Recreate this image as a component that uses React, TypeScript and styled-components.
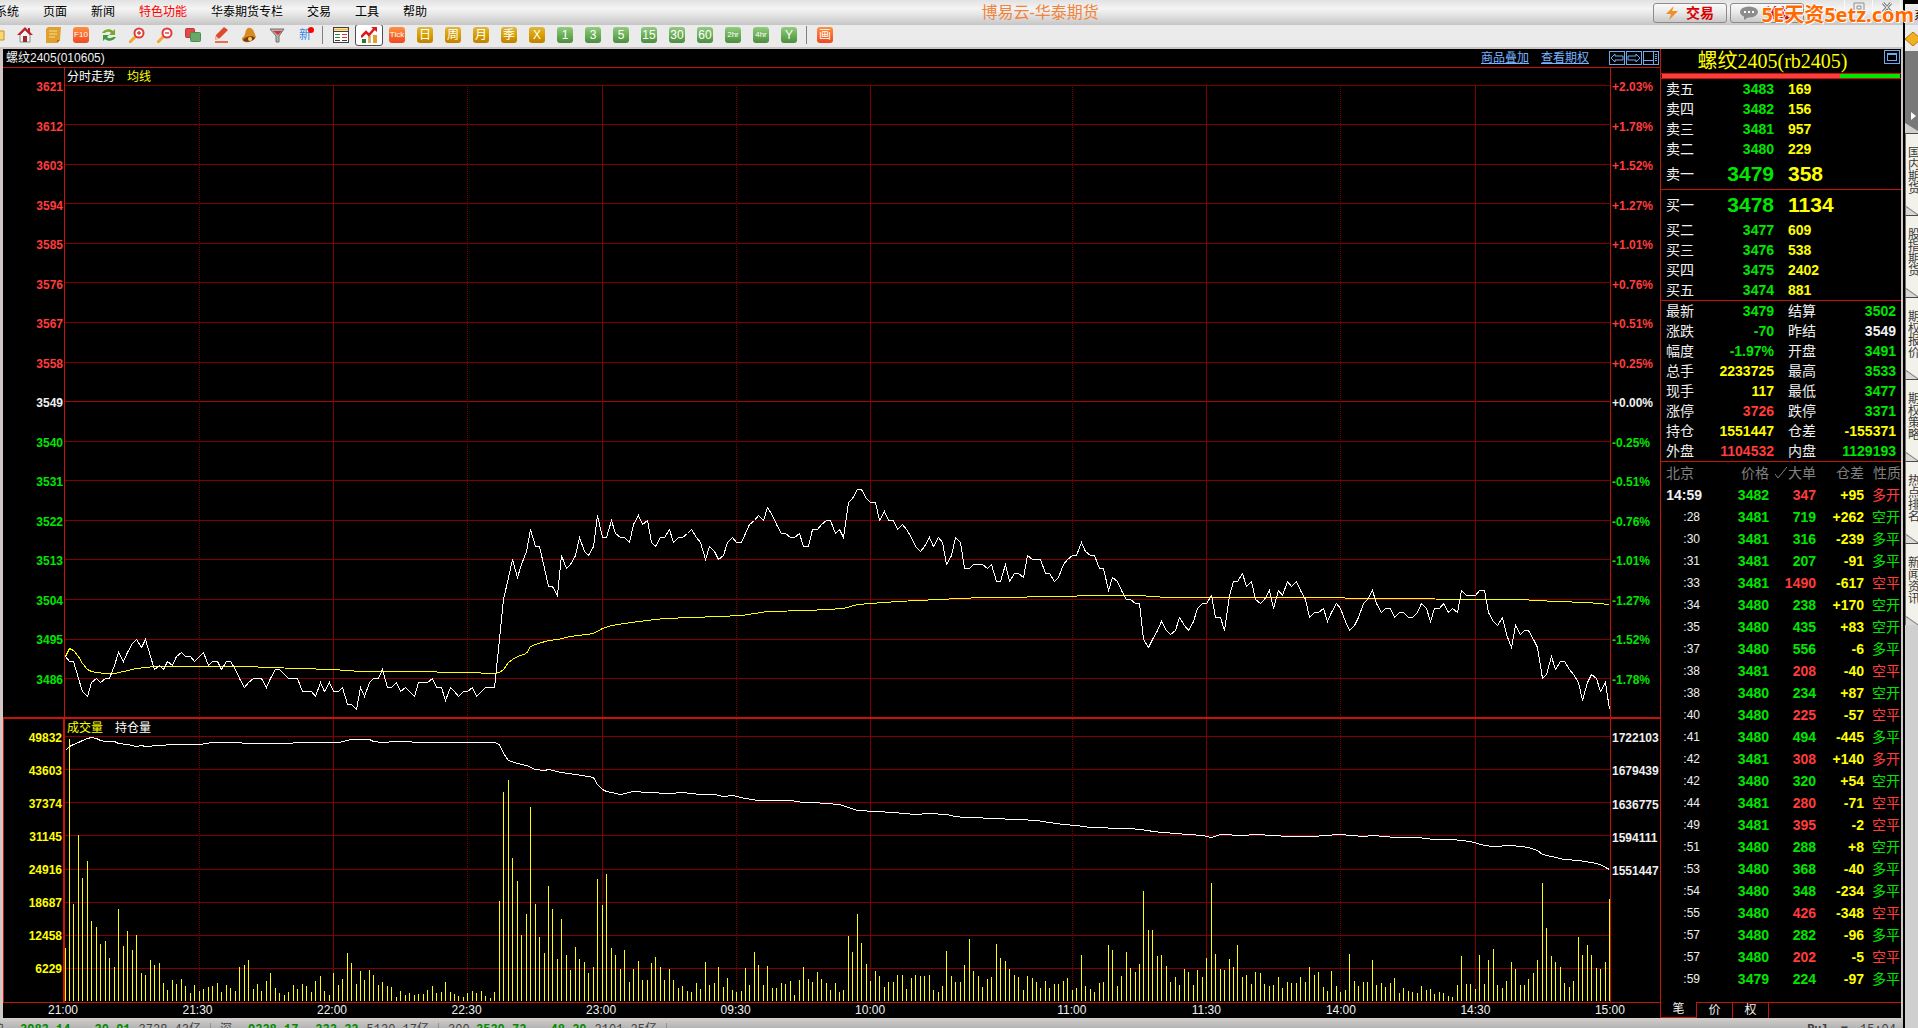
import React from "react";
import styled, { createGlobalStyle } from "styled-components";

const SANS = '"Liberation Sans", "Noto Sans CJK SC", sans-serif';
const RED = "#ff3c3c";
const GREEN = "#00e600";
const YELLOW = "#ffff00";
const WHITE = "#f0f0f0";
const FRAME = "#c81408";
const GRID = "#800000";

const GlobalStyle = createGlobalStyle`
  * { box-sizing: border-box; }
  body { margin: 0; background: #000; overflow: hidden; font: 12px/14px ${SANS}; }
  button { margin: 0; padding: 0; border: 0; background: none; color: inherit; font: inherit; white-space: nowrap; cursor: pointer; }
  table { border-collapse: collapse; table-layout: fixed; width: 100%; }
  td, th { padding: 0; font-weight: inherit; white-space: nowrap; }
`;

/* ---------- window ---------- */

const Screen = styled.div`
  position: relative;
  display: flex;
  height: 100vh;
  overflow: hidden;
`;
const Window = styled.div`
  flex: 1;
  min-width: 0;
  display: flex;
  flex-direction: column;
`;
const TitleBar = styled.header`
  display: flex;
  align-items: center;
  height: 25px;
  background: linear-gradient(#e2e2e2, #f4f4f4 35%, #e4e4e4 60%, #c6c6c6);
`;
const Menu = styled.nav`
  display: flex;
  gap: 24px;
  margin-left: -5px;
`;
const MenuItem = styled.button<{ $hot?: boolean }>`
  line-height: 25px;
  color: ${(p) => (p.$hot ? "#ff0000" : "#000")};
`;
const AppTitle = styled.h1`
  flex: 1;
  margin: 0;
  text-align: center;
  font-size: 16px;
  line-height: 22px;
  font-weight: 400;
  color: #f0843c;
`;
const HeaderActions = styled.div`
  display: flex;
  gap: 3px;
`;
const PillButton = styled.button`
  display: flex;
  align-items: center;
  justify-content: center;
  gap: 8px;
  width: 74px;
  height: 20px;
  border: 1px solid #8c8c8c;
  border-radius: 3px;
  background: linear-gradient(#fafafa, #e8e8e8 50%, #c8c8c8);
  color: #d80000;
  font-size: 14px;
  font-weight: 700;
`;
const WindowControls = styled.div`
  display: flex;
  align-self: flex-start;
  margin-left: 13px;
  margin-right: 2px;
`;
const ControlButton = styled.button`
  display: grid;
  place-items: center;
  width: 28px;
  height: 15px;
  border-right: 1px solid #fafafa;
`;
const Watermark = styled.div`
  position: absolute;
  top: 0;
  right: 4px;
  font: 700 20px/30px "Noto Sans", "Noto Sans CJK SC", sans-serif;
  color: #ff6a00;
  text-shadow: 1px 1px 0 #fff, -1px 0 0 #fff, 0 -1px 0 #fff;
  pointer-events: none;
`;

/* ---------- toolbar ---------- */

const Toolbar = styled.div`
  display: flex;
  align-items: center;
  height: 24px;
  padding-bottom: 2px;
  background: #ebebeb;
  border-bottom: 2px solid #cdc3c3;
  overflow: hidden;
`;
const Tool = styled.button<{ $active?: boolean; $first?: boolean }>`
  display: grid;
  place-items: center;
  flex: none;
  width: 28px;
  height: 22px;
  margin-left: ${(p) => (p.$first ? "-17px" : "0")};
  border: ${(p) => (p.$active ? "1px solid #505050" : "0")};
  border-radius: 3px;
  background: ${(p) => (p.$active ? "#fff" : "none")};
`;
const ToolDivider = styled.span`
  width: 5px;
  height: 18px;
  border-left: 1px solid #808080;
  margin-left: 3px;
`;
const tones = {
  gold: "linear-gradient(#e0b840, #d8a000 50%, #c08000)",
  green: "linear-gradient(#94cc80, #6cb058 50%, #4c8c40)",
  orange: "linear-gradient(#ff9040, #f04820)",
};
const Badge = styled.span<{ $tone: keyof typeof tones; $small?: boolean }>`
  display: flex;
  align-items: center;
  justify-content: center;
  width: 16px;
  height: 16px;
  border-radius: 3px;
  background: ${(p) => tones[p.$tone]};
  color: #fff;
  font-size: ${(p) => (p.$small ? 8 : 12)}px;
  line-height: 16px;
`;
const NewMark = styled.span`
  position: relative;
  color: #3c8ce6;
  line-height: 16px;
  &::after {
    content: "";
    position: absolute;
    top: 0;
    right: -3px;
    width: 6px;
    height: 6px;
    border-radius: 50%;
    background: #ff0000;
  }
`;

/* ---------- body ---------- */

const Body = styled.div`
  flex: 1;
  min-height: 0;
  display: flex;
  background: #000;
  border-left: 3px solid #cfc8c6;
  border-right: 2px solid #cfc8c6;
`;
const ChartArea = styled.main`
  flex: 1;
  min-width: 0;
  display: flex;
  flex-direction: column;
`;
const ChartHeader = styled.div`
  display: flex;
  align-items: center;
  height: 19px;
  padding: 0 1px 0 3px;
  border-bottom: 1px solid ${FRAME};
  color: ${WHITE};
`;
const HeaderLinks = styled.div`
  display: flex;
  gap: 12px;
  margin: 0 20px 0 auto;
  a { color: #78b4ff; }
`;
const PaneButtons = styled.div`
  display: flex;
  gap: 1px;
`;
const PaneButton = styled.button`
  display: grid;
  place-items: center;
  width: 16px;
  height: 14px;
  border: 1px solid #6eaaf0;
`;
const Pane = styled.section<{ $grow: number }>`
  flex: ${(p) => p.$grow} 1 0;
  min-height: 0;
  display: grid;
  grid-template-columns: 61px 1fr 49px;
`;
const PaneDivider = styled.div`
  height: 2px;
  background: ${FRAME};
`;
const Scale = styled.div<{ $top: number; $bottom: number; $side: "left" | "right"; $framed?: boolean }>`
  display: flex;
  flex-direction: column;
  justify-content: space-between;
  min-height: 0;
  padding: ${(p) => p.$top}px 1px ${(p) => p.$bottom}px;
  text-align: ${(p) => (p.$side === "left" ? "right" : "left")};
  font-weight: 700;
  border: 0 solid ${FRAME};
  border-left-width: ${(p) => (p.$framed ? 1 : 0)}px;
  border-right-width: ${(p) => (p.$framed ? 1 : 0)}px;
`;
const Mark = styled.span<{ $color: string }>`
  color: ${(p) => p.$color};
  line-height: 14px;
`;
const Plot = styled.div`
  display: grid;
  grid-template: 17px minmax(0, 1fr) / minmax(0, 1fr);
  min-height: 0;
  border-left: 1px solid ${FRAME};
  border-right: 1px solid ${FRAME};
`;
const Legend = styled.div`
  grid-area: 1 / 1;
  display: flex;
  gap: 12px;
  padding-left: 2px;
  line-height: 18px;
  color: #fff;
  z-index: 1;
`;
const LegendItem = styled.span<{ $color?: string }>`
  color: ${(p) => p.$color || "#fff"};
`;
const Drawing = styled.svg<{ $whole?: boolean }>`
  grid-area: ${(p) => (p.$whole ? "1 / 1 / 3 / 2" : "2 / 1")};
  display: block;
  width: 100%;
  height: 100%;
  * { vector-effect: non-scaling-stroke; }
`;
const TimeAxis = styled.div`
  display: flex;
  height: 16px;
  padding: 0 50px 0 60px;
  border-top: 1px solid ${FRAME};
  color: ${WHITE};
`;
const TimeSlot = styled.div<{ $minutes: number }>`
  flex: ${(p) => p.$minutes} 1 0;
  min-width: 0;
`;
const TimeLabel = styled.span`
  display: flex;
  justify-content: center;
  width: 0;
  line-height: 15px;
`;

/* ---------- quote panel ---------- */

const Panel = styled.aside`
  flex: none;
  display: flex;
  flex-direction: column;
  width: 241px;
  border-left: 1px solid ${FRAME};
  color: ${WHITE};
`;
const PanelTitle = styled.div`
  display: flex;
  align-items: flex-start;
  height: 24px;
  padding: 1px 1px 0 0;
  h2 {
    flex: 1;
    margin: 0;
    text-align: center;
    font: 400 20px/22px "Liberation Serif", "Noto Sans CJK SC", serif;
    color: ${YELLOW};
  }
`;
const Ratio = styled.div`
  display: flex;
  height: 6px;
  padding: 0 1px;
  border-top: 1px solid ${FRAME};
  border-bottom: 1px solid ${FRAME};
`;
const RatioPart = styled.div<{ $share: number; $color: string }>`
  flex: ${(p) => p.$share};
  background: ${(p) => p.$color};
`;
const Block = styled.div`
  border-bottom: 1px solid ${FRAME};
`;
const QuoteTable = styled.table`
  font-size: 14px;
  line-height: 20px;
`;
const Row = styled.tr<{ $height?: number }>`
  height: ${(p) => p.$height || 20}px;
`;
const NameCell = styled.th<{ $second?: boolean }>`
  padding-left: ${(p) => (p.$second ? 14 : 5)}px;
  text-align: left;
  font-weight: 400;
`;
const NumCell = styled.td<{ $color: string; $left?: boolean; $big?: boolean; $end?: boolean }>`
  padding-left: ${(p) => (p.$left ? 14 : 0)}px;
  padding-right: ${(p) => (p.$end ? 5 : 0)}px;
  text-align: ${(p) => (p.$left ? "left" : "right")};
  color: ${(p) => p.$color};
  font-weight: 700;
  font-size: ${(p) => (p.$big ? 21 : 14)}px;
`;
const HeadCell = styled.th<{ $left?: boolean }>`
  padding-left: ${(p) => (p.$left ? 5 : 0)}px;
  text-align: ${(p) => (p.$left ? "left" : "right")};
  color: #808080;
  font-weight: 400;
  svg { vertical-align: -1px; }
`;
const TimeCell = styled.td<{ $first?: boolean }>`
  padding-right: ${(p) => (p.$first ? 0 : 2)}px;
  text-align: right;
  font-size: ${(p) => (p.$first ? 14 : 12)}px;
  font-weight: ${(p) => (p.$first ? 700 : 400)};
`;
const KindCell = styled.td<{ $color: string }>`
  padding-right: 1px;
  text-align: right;
  color: ${(p) => p.$color};
`;
const Tabs = styled.div`
  display: flex;
  height: 16px;
  margin-top: auto;
`;
const Tab = styled.button<{ $active?: boolean }>`
  width: 36px;
  line-height: 15px;
  border: 0 solid ${FRAME};
  border-right-width: 1px;
  border-top-width: ${(p) => (p.$active ? 0 : 1)}px;
  border-bottom-width: ${(p) => (p.$active ? 1 : 0)}px;
`;
const TabRest = styled.span`
  flex: 1;
  border-top: 1px solid ${FRAME};
`;

/* ---------- status bar and side strip ---------- */

const StatusBar = styled.footer`
  display: flex;
  align-items: flex-start;
  height: 10px;
  padding-top: 5px;
  background: linear-gradient(#d2cecc, #b4b4b4);
  color: #404040;
  overflow: hidden;
  font: 12px/14px "Liberation Mono", "Noto Sans CJK SC", monospace;
  white-space: nowrap;
`;
const Market = styled.div`
  display: flex;
  width: 228px;
  padding: 0 9px;
  border-right: 1px solid #909090;
  &:first-child { margin-left: -17px; }
`;
const MarketName = styled.span`
  width: 28px;
`;
const Change = styled.span<{ $auto?: boolean }>`
  color: #008c00;
  font-weight: 700;
  margin-left: ${(p) => (p.$auto ? "auto" : "0")};
  margin-right: ${(p) => (p.$auto ? "8px" : "0")};
`;
const Clock = styled.div`
  display: flex;
  gap: 12px;
  margin: 0 5px 0 auto;
  padding-right: 2px;
`;
const SideStrip = styled.aside`
  flex: none;
  display: flex;
  flex-direction: column;
  width: 15px;
  border-left: 2px solid #000;
  background: #cfcfcf;
  overflow: hidden;
`;
const StripTop = styled.div`
  height: 25px;
  border-top: 4px solid #000;
  padding-left: 9px;
  line-height: 24px;
  background: linear-gradient(#f0f0f0, #d0d0d0);
`;
const StripTool = styled.div`
  height: 26px;
  padding-top: 7px;
  background: #ebebeb;
`;
const StripHandle = styled.button`
  display: block;
  height: 80px;
  background: #787878;
  clip-path: polygon(0 0, 100% 0, 100% 100%, 0 90%);
`;
const StripTabs = styled.div`
  display: flex;
  flex-direction: column;
  padding-top: 2px;
`;
const StripTab = styled.button`
  display: flex;
  flex-direction: column;
  align-items: flex-start;
  height: 82px;
  padding: 13px 0 0 2px;
  line-height: 12px;
  color: #383838;
  border-top: 1px solid #484848;
  border-left: 1px solid #707070;
  background: linear-gradient(35deg, #d8d8d8 6px, #808080 7px, #f2f2ea 8px);
`;

/* ---------- market data ---------- */

const SESSION_MINUTES = 345;
const STEP = 4.477;

// one closing price for each trading minute
const prices = [
  3491, 3490, 3490, 3486, 3483, 3482, 3485, 3486, 3485, 3486, 3486, 3489, 3492, 3490, 3492, 3494, 3495, 3493, 3495, 3491,
  3488, 3489, 3488, 3490, 3489, 3491, 3492, 3491, 3491, 3490, 3491, 3492, 3489, 3490, 3490, 3488, 3490, 3490, 3488, 3486,
  3484, 3485, 3486, 3486, 3486, 3484, 3486, 3488, 3488, 3487, 3486, 3486, 3486, 3483, 3483, 3483, 3482, 3485, 3483, 3485,
  3483, 3483, 3484, 3480, 3480, 3479, 3484, 3482, 3485, 3486, 3486, 3488, 3484, 3484, 3485, 3483, 3484, 3483, 3482, 3485,
  3485, 3485, 3486, 3484, 3484, 3481, 3484, 3483, 3482, 3483, 3483, 3484, 3482, 3483, 3484, 3484, 3484, 3495, 3504, 3509,
  3513, 3509, 3512, 3515, 3520, 3516, 3516, 3511, 3507, 3507, 3505, 3514, 3511, 3512, 3514, 3518, 3515, 3514, 3516, 3523,
  3518, 3518, 3522, 3519, 3518, 3518, 3517, 3521, 3523, 3521, 3522, 3517, 3516, 3518, 3518, 3520, 3517, 3518, 3518, 3519,
  3520, 3518, 3517, 3513, 3516, 3515, 3513, 3514, 3517, 3518, 3517, 3517, 3519, 3521, 3522, 3523, 3522, 3525, 3523, 3521,
  3519, 3519, 3518, 3518, 3519, 3516, 3516, 3520, 3520, 3521, 3522, 3522, 3519, 3520, 3518, 3526, 3527, 3529, 3529, 3527,
  3526, 3526, 3522, 3524, 3522, 3522, 3520, 3521, 3520, 3518, 3516, 3515, 3516, 3518, 3516, 3518, 3517, 3512, 3514, 3518,
  3517, 3511, 3511, 3512, 3512, 3512, 3511, 3512, 3508, 3508, 3512, 3508, 3510, 3510, 3509, 3514, 3513, 3513, 3513, 3510,
  3510, 3508, 3509, 3512, 3513, 3514, 3514, 3517, 3515, 3514, 3514, 3511, 3511, 3506, 3509, 3508, 3506, 3504, 3504, 3503,
  3503, 3495, 3493, 3495, 3497, 3499, 3497, 3496, 3497, 3500, 3498, 3497, 3499, 3502, 3503, 3503, 3505, 3500, 3500, 3497,
  3505, 3508, 3508, 3510, 3507, 3508, 3504, 3503, 3504, 3506, 3502, 3506, 3505, 3508, 3507, 3508, 3506, 3504, 3500, 3501,
  3501, 3502, 3499, 3501, 3503, 3502, 3499, 3497, 3498, 3500, 3503, 3504, 3506, 3503, 3501, 3502, 3502, 3500, 3501, 3501,
  3500, 3500, 3501, 3503, 3502, 3499, 3502, 3502, 3503, 3501, 3502, 3501, 3506, 3505, 3505, 3505, 3506, 3506, 3501, 3499,
  3498, 3500, 3496, 3493, 3498, 3496, 3497, 3497, 3495, 3493, 3486, 3487, 3491, 3488, 3490, 3490, 3488, 3487, 3485, 3481,
  3485, 3487, 3486, 3483, 3485, 3479,
];

// [minute, average price]
const average: [number, number][] = [
  [0, 3491], [1, 3492.8], [2, 3492.5], [3, 3491.1], [4, 3489.5], [5, 3488.1], [6, 3487.6], [7, 3487.4], [9, 3487.2],
  [11, 3487.2], [13, 3487.6], [16, 3488.3], [20, 3488.7], [40, 3488.7], [52, 3488.4], [60, 3488.1], [66, 3487.7],
  [76, 3487.5], [90, 3487.4], [96, 3487.2], [97, 3487.4], [98, 3488.1], [99, 3489.6], [100, 3490.4], [101, 3491.1],
  [103, 3491.8], [104, 3493.3], [105, 3493.7], [108, 3494.6], [110, 3494.9], [113, 3495.5], [118, 3496.2], [120, 3497.4],
  [122, 3498.1], [125, 3498.5], [128, 3498.9], [134, 3499.6], [140, 3499.9], [146, 3500.2], [151, 3500.4], [157, 3501.2],
  [166, 3501.5], [174, 3501.9], [177, 3502.9], [180, 3503], [186, 3503.5], [195, 3504], [205, 3504.4], [225, 3504.6],
  [227, 3504.9], [240, 3504.8], [246, 3504.5], [285, 3504.5], [287, 3504.2], [325, 3504.1], [333, 3503.6], [340, 3503.2],
  [345, 3502.9],
];

// [minute, depth below the top of the volume pane]
const openInterest: [number, number][] = [
  [0, 31], [1, 27], [2, 25], [3, 23], [4, 21], [5, 19], [6, 18], [7, 19], [8, 21], [9, 22], [11, 22], [12, 24], [14, 25],
  [16, 27], [17, 26], [18, 27], [21, 26], [24, 25], [30, 25], [33, 23], [38, 23], [41, 24], [43, 24], [50, 24], [52, 23],
  [61, 23], [64, 20], [68, 20], [69, 22], [71, 23], [74, 22], [81, 23], [87, 23], [96, 23], [97, 25], [98, 34], [99, 41],
  [101, 44], [103, 46], [105, 50], [107, 51], [108, 50], [111, 53], [114, 55], [117, 57], [118, 58], [119, 65], [120, 70],
  [121, 72], [122, 73], [124, 75], [127, 72], [130, 73], [135, 74], [138, 73], [142, 75], [145, 75], [147, 77], [149, 76],
  [152, 79], [155, 81], [162, 81], [165, 83], [167, 83], [170, 84], [173, 85], [175, 88], [177, 91], [181, 92], [185, 93],
  [190, 95], [193, 94], [197, 95], [199, 97], [201, 98], [203, 98], [207, 99], [213, 100], [217, 101], [220, 103],
  [223, 105], [226, 106], [229, 108], [232, 108], [234, 109], [238, 109], [242, 111], [243, 112], [248, 114], [254, 116],
  [256, 118], [258, 115], [263, 116], [266, 115], [270, 116], [273, 117], [279, 117], [281, 116], [285, 115], [290, 117],
  [292, 116], [295, 117], [297, 118], [302, 118], [306, 120], [310, 120], [314, 122], [317, 126], [319, 127], [323, 126],
  [325, 127], [327, 128], [329, 131], [330, 135], [332, 137], [335, 140], [338, 141], [341, 143], [343, 145], [344, 148],
  [345, 150],
];

const volumes = [
  53, 262, 97, 166, 123, 140, 80, 74, 57, 60, 43, 34, 92, 55, 70, 51, 66, 28, 26, 41, 36, 38, 18, 11, 21, 17, 22, 15, 8, 16,
  10, 12, 14, 15, 18, 9, 16, 13, 10, 34, 36, 41, 12, 17, 10, 20, 28, 13, 8, 6, 9, 16, 12, 17, 15, 9, 20, 25, 10, 6,
  28, 16, 22, 48, 38, 17, 30, 21, 31, 26, 16, 19, 15, 14, 4, 10, 6, 8, 6, 7, 7, 11, 15, 8, 9, 19, 9, 7, 5, 4,
  8, 10, 8, 10, 5, 3, 9, 100, 209, 221, 143, 120, 66, 87, 194, 97, 64, 48, 115, 92, 42, 82, 46, 31, 54, 42, 39, 28, 34, 122,
  96, 127, 53, 46, 32, 51, 19, 32, 40, 21, 21, 38, 44, 34, 21, 32, 21, 13, 15, 10, 9, 18, 12, 39, 16, 18, 34, 14, 23, 11,
  9, 10, 33, 16, 49, 36, 16, 35, 13, 13, 18, 17, 20, 6, 21, 34, 22, 19, 29, 22, 18, 11, 18, 9, 11, 65, 49, 87, 58, 37,
  20, 30, 25, 14, 19, 19, 26, 26, 12, 23, 26, 25, 25, 26, 11, 9, 15, 50, 25, 19, 19, 36, 62, 30, 25, 14, 22, 24, 57, 43,
  40, 32, 26, 24, 11, 25, 23, 19, 13, 20, 13, 17, 17, 20, 23, 11, 13, 46, 15, 12, 9, 18, 19, 56, 51, 15, 25, 49, 33, 29,
  37, 110, 71, 71, 45, 46, 35, 19, 24, 16, 32, 29, 16, 31, 24, 43, 118, 47, 32, 31, 42, 34, 56, 24, 26, 17, 29, 28, 17, 15,
  16, 24, 13, 19, 18, 18, 24, 19, 34, 26, 29, 14, 10, 30, 15, 9, 11, 47, 20, 15, 19, 19, 41, 16, 18, 14, 18, 23, 8, 13,
  10, 9, 8, 15, 11, 12, 7, 9, 8, 5, 4, 16, 45, 17, 17, 12, 46, 17, 41, 52, 16, 13, 20, 39, 32, 16, 16, 22, 28, 41,
  118, 73, 45, 39, 34, 18, 14, 20, 64, 46, 56, 46, 33, 32, 39, 102,
];

const times = [
  { label: "21:00", at: 0, solid: false },
  { label: "21:30", at: 30, solid: false },
  { label: "22:00", at: 60, solid: true },
  { label: "22:30", at: 90, solid: false },
  { label: "23:00", at: 120, solid: true },
  { label: "09:30", at: 150, solid: false },
  { label: "10:00", at: 180, solid: true },
  { label: "11:00", at: 225, solid: false },
  { label: "11:30", at: 255, solid: true },
  { label: "14:00", at: 285, solid: false },
  { label: "14:30", at: 315, solid: true },
  { label: "15:00", at: 345, solid: false },
];

const toneOf = (v: number) => (v > 3549 ? RED : v === 3549 ? WHITE : GREEN);
const priceLevels = Array.from({ length: 16 }, (_, i) => 3621 - 9 * i);
const percents = ["+2.03%", "+1.78%", "+1.52%", "+1.27%", "+1.01%", "+0.76%", "+0.51%", "+0.25%", "+0.00%", "-0.25%", "-0.51%", "-0.76%", "-1.01%", "-1.27%", "-1.52%", "-1.78%"];
const volumeLevels = [49832, 43603, 37374, 31145, 24916, 18687, 12458, 6229];
const interestLevels = [1722103, 1679439, 1636775, 1594111, 1551447];

const asks: [string, number, number][] = [["卖五", 3483, 169], ["卖四", 3482, 156], ["卖三", 3481, 957], ["卖二", 3480, 229], ["卖一", 3479, 358]];
const bids: [string, number, number][] = [["买一", 3478, 1134], ["买二", 3477, 609], ["买三", 3476, 538], ["买四", 3475, 2402], ["买五", 3474, 881]];

const stats: [string, string, string, string, string, string][] = [
  ["最新", "3479", GREEN, "结算", "3502", GREEN],
  ["涨跌", "-70", GREEN, "昨结", "3549", WHITE],
  ["幅度", "-1.97%", GREEN, "开盘", "3491", GREEN],
  ["总手", "2233725", YELLOW, "最高", "3533", GREEN],
  ["现手", "117", YELLOW, "最低", "3477", GREEN],
  ["涨停", "3726", RED, "跌停", "3371", GREEN],
  ["持仓", "1551447", YELLOW, "仓差", "-155371", YELLOW],
  ["外盘", "1104532", RED, "内盘", "1129193", GREEN],
];

const ticks: [string, number, number, string, string, boolean][] = [
  ["14:59", 3482, 347, "+95", "多开", true],
  [":28", 3481, 719, "+262", "空开", false],
  [":30", 3481, 316, "-239", "多平", false],
  [":31", 3481, 207, "-91", "多平", false],
  [":33", 3481, 1490, "-617", "空平", true],
  [":34", 3480, 238, "+170", "空开", false],
  [":35", 3480, 435, "+83", "空开", false],
  [":37", 3480, 556, "-6", "多平", false],
  [":38", 3481, 208, "-40", "空平", true],
  [":38", 3480, 234, "+87", "空开", false],
  [":40", 3480, 225, "-57", "空平", true],
  [":41", 3480, 494, "-445", "多平", false],
  [":42", 3481, 308, "+140", "多开", true],
  [":42", 3480, 320, "+54", "空开", false],
  [":44", 3481, 280, "-71", "空平", true],
  [":49", 3481, 395, "-2", "空平", true],
  [":51", 3480, 288, "+8", "空开", false],
  [":53", 3480, 368, "-40", "多平", false],
  [":54", 3480, 348, "-234", "多平", false],
  [":55", 3480, 426, "-348", "空平", true],
  [":57", 3480, 282, "-96", "多平", false],
  [":57", 3480, 202, "-5", "空平", true],
  [":59", 3479, 224, "-97", "多平", false],
];

/* ---------- charts ---------- */

const xOf = (minute: number) => Math.floor(minute * STEP) + 0.5;
const priceY = (p: number) => Math.floor((3621 - p) * 4.397) + 0.5;
const join = (pts: [number, number][]) => pts.map(([x, y]) => `${x},${y}`).join(" ");

function TimeLines({ height }: { height: number }) {
  return (
    <>
      {times.slice(1, -1).map((t) => (
        <line key={t.label} x1={xOf(t.at)} x2={xOf(t.at)} y1={0} y2={height} stroke={GRID} strokeDasharray={t.solid ? undefined : "1 1"} />
      ))}
    </>
  );
}

function PriceChart() {
  return (
    <Drawing viewBox="0 0 1545 632" preserveAspectRatio="none" shapeRendering="crispEdges" role="img" aria-label="分时走势">
      {priceLevels.map((p) => (
        <line key={p} x1={0} x2={1545} y1={priceY(p)} y2={priceY(p)} stroke={p === 3549 ? "#a80808" : GRID} />
      ))}
      <TimeLines height={632} />
      <polyline fill="none" stroke={YELLOW} points={join(average.map(([m, p]) => [xOf(m), priceY(p)]))} />
      <polyline fill="none" stroke="#fff" points={join(prices.map((p, m) => [xOf(m), priceY(p)]))} />
    </Drawing>
  );
}

function VolumeChart() {
  return (
    <Drawing $whole viewBox="0 0 1545 283" preserveAspectRatio="none" shapeRendering="crispEdges" role="img" aria-label="成交量">
      {volumeLevels.map((v, i) => {
        const y = 17.5 + Math.round(i * 33.15);
        return <line key={v} x1={0} x2={1545} y1={y} y2={y} stroke={GRID} />;
      })}
      <TimeLines height={283} />
      <path stroke={YELLOW} d={volumes.map((v, m) => `M${xOf(m)} 282V${282 - v}`).join("")} />
      <polyline fill="none" stroke="#fff" points={join(openInterest.map(([m, y]) => [xOf(m), y + 0.5]))} />
    </Drawing>
  );
}

/* ---------- icons ---------- */

const icons: Record<string, React.ReactNode> = {
  首页: (
    <>
      <path d="M3 8v7h10V8L8 3z" fill="#f4f4f4" stroke="#909090" />
      <path d="M8 0L0 8h3l5-5 5 5h3L13 5V1h-2v2z" fill="#c81e28" />
      <rect x="6" y="9" width="4" height="6" fill="#a02828" />
    </>
  ),
  公告: (
    <>
      <path d="M1 2l2-2h13l-1 13-3 3H1z" fill="#e0a030" />
      <path d="M4 4h8M4 7h8M4 10h6" stroke="#fae08c" />
      <path d="M12 16v-3h3z" fill="#a87010" />
    </>
  ),
  刷新: (
    <>
      <path d="M1 6c2-4 8-5 11-2l2-2v6H8l2-2c-2-2-5-1-6 0z" fill="#78a828" />
      <path d="M15 10c-2 4-8 5-11 2l-2 2V8h6l-2 2c2 2 5 1 6 0z" fill="#3c9c3c" />
    </>
  ),
  放大: (
    <>
      <path d="M1 15l6-6" stroke="#f0a830" strokeWidth="3" strokeLinecap="round" />
      <circle cx="10" cy="6" r="4.5" fill="#fff" stroke="#e03c3c" strokeWidth="2" />
      <path d="M8 6h4M10 4v4" stroke="#e03c3c" strokeWidth="1.4" />
    </>
  ),
  缩小: (
    <>
      <path d="M1 15l6-6" stroke="#f0a830" strokeWidth="3" strokeLinecap="round" />
      <circle cx="10" cy="6" r="4.5" fill="#fff" stroke="#e03c3c" strokeWidth="2" />
      <path d="M8 6h4" stroke="#e03c3c" strokeWidth="1.4" />
    </>
  ),
  叠加: (
    <>
      <rect x="0.5" y="1.5" width="9" height="9" rx="1" fill="#e64646" stroke="#b43c3c" />
      <rect x="5.5" y="5.5" width="10" height="9" rx="1" fill="#68a868" stroke="#4c8c50" />
    </>
  ),
  画线: (
    <>
      <path d="M2 13l1-5 8-8 4 3-8 8z" fill="#e04830" />
      <path d="M2 13l1-4 3 3z" fill="#f0c8a0" />
      <path d="M2 15h13" stroke="#f04020" strokeWidth="1.5" />
    </>
  ),
  预警: (
    <>
      <path d="M1 11C6 8 3 3 7 1c5-1 6 4 8 9-2 4-8 6-11 5-3-1-3-3-3-4z" fill="#d88c20" />
      <ellipse cx="8" cy="12" rx="6" ry="2.5" fill="#7c3c10" transform="rotate(-12 8 12)" />
      <circle cx="9" cy="12" r="2" fill="#f8d070" />
    </>
  ),
  筛选: (
    <>
      <path d="M1 2h14l-5 7v6H7V9z" fill="#b4b4b4" stroke="#707070" />
      <path d="M4 4h9l-4 4z" fill="#e03030" />
    </>
  ),
  报价: (
    <>
      <rect x="0.5" y="0.5" width="15" height="15" fill="#fff" stroke="#404040" />
      <path d="M1 2.500h14" stroke="#f0c040" strokeWidth="2" />
      <path d="M0 4.500h16" stroke="#404040" />
      <path d="M2 7.500h5M2 10.500h5" stroke="#209020" />
      <path d="M9 7.500h5M9 10.500h5" stroke="#e03030" />
      <path d="M2 13.500h5M9 13.500h5" stroke="#404040" />
    </>
  ),
  分时: (
    <>
      <path d="M1 12h4v4H1z" fill="#287828" />
      <path d="M7 9h3v7H7z" fill="#d8b070" />
      <path d="M12 8h4v8h-4z" fill="#e0a030" />
      <path d="M0 10l5-5 3 3 6-7" fill="none" stroke="#e01818" strokeWidth="2.500" />
      <path d="M10 0h6v5z" fill="#e01818" />
    </>
  ),
};
const Icon = ({ name }: { name: string }) => <svg width="16" height="16" viewBox="0 0 16 16" aria-hidden="true">{icons[name]}</svg>;

const periods: [string, keyof typeof tones, boolean?][] = [
  ["Tick", "orange", true], ["日", "gold"], ["周", "gold"], ["月", "gold"], ["季", "gold"], ["X", "gold"],
  ["1", "green"], ["3", "green"], ["5", "green"], ["15", "green"], ["30", "green"], ["60", "green"],
  ["2hr", "green", true], ["4hr", "green", true], ["Y", "green"],
];

function BookTable({ rows, best }: { rows: [string, number, number][]; best: string }) {
  return (
    <Block>
      <QuoteTable>
        <colgroup><col width="48" /><col width="65" /><col /></colgroup>
        <tbody>
          {rows.map(([name, price, qty]) => (
            <Row key={name} $height={name === best ? 30 : 20}>
              <NameCell scope="row">{name}</NameCell>
              <NumCell $color={GREEN} $big={name === best}>{price}</NumCell>
              <NumCell $color={YELLOW} $left $big={name === best}>{qty}</NumCell>
            </Row>
          ))}
        </tbody>
      </QuoteTable>
    </Block>
  );
}

export default function App() {
  return (
    <Screen>
      <GlobalStyle />
      <Window>
        <TitleBar>
          <Menu>
            {["系统", "页面", "新闻", "特色功能", "华泰期货专栏", "交易", "工具", "帮助"].map((m) => (
              <MenuItem key={m} $hot={m === "特色功能"}>{m}</MenuItem>
            ))}
          </Menu>
          <AppTitle>博易云-华泰期货</AppTitle>
          <HeaderActions>
            <PillButton>
              <svg width="12" height="14" viewBox="0 0 12 14" aria-hidden="true"><path d="M8 0L0 8h5l-2 6 9-9H6z" fill="#f09020" /></svg>
              交易
            </PillButton>
            <PillButton>
              <svg width="18" height="14" viewBox="0 0 18 14" aria-hidden="true">
                <ellipse cx="9" cy="6" rx="9" ry="5.500" fill="#8c8c8c" />
                <path d="M4 9v5l5-3z" fill="#8c8c8c" />
                <path d="M4 6h2M8 6h2M12 6h2" stroke="#fff" strokeWidth="2" />
              </svg>
              论坛
            </PillButton>
          </HeaderActions>
          <WindowControls>
            <ControlButton aria-label="最小化"><svg width="12" height="12"><path d="M1 8h10" stroke="#909090" strokeWidth="2" /></svg></ControlButton>
            <ControlButton aria-label="最大化"><svg width="12" height="12"><path d="M1 1h10v9H1z M4 4h4v3H4z" fill="none" stroke="#909090" /></svg></ControlButton>
            <ControlButton aria-label="关闭"><svg width="12" height="12"><path d="M2 1l8 9M10 1l-8 9" stroke="#808080" strokeWidth="3" /><path d="M2 1l8 9M10 1l-8 9" stroke="#fff" /></svg></ControlButton>
          </WindowControls>
        </TitleBar>

        <Toolbar>
          <Tool $first aria-label="打开"><svg width="16" height="16"><path d="M1 4h14v9H1z" fill="#f8d870" stroke="#c89020" /></svg></Tool>
          <Tool aria-label="首页"><Icon name="首页" /></Tool>
          <Tool aria-label="公告"><Icon name="公告" /></Tool>
          <Tool><Badge $tone="orange" $small>F10</Badge></Tool>
          {["刷新", "放大", "缩小", "叠加", "画线", "预警", "筛选"].map((n) => (
            <Tool key={n} aria-label={n}><Icon name={n} /></Tool>
          ))}
          <Tool><NewMark>新</NewMark></Tool>
          <ToolDivider />
          <Tool aria-label="报价"><Icon name="报价" /></Tool>
          <Tool $active aria-label="分时"><Icon name="分时" /></Tool>
          {periods.map(([label, tone, small]) => (
            <Tool key={label}><Badge $tone={tone} $small={small}>{label}</Badge></Tool>
          ))}
          <ToolDivider />
          <Tool><Badge $tone="orange">画</Badge></Tool>
        </Toolbar>

        <Body>
          <ChartArea>
            <ChartHeader>
              <span>螺纹2405(010605)</span>
              <HeaderLinks>
                <a href="#overlay">商品叠加</a>
                <a href="#options">查看期权</a>
              </HeaderLinks>
              <PaneButtons>
                <PaneButton aria-label="上一个"><svg width="14" height="10"><path d="M1 5l4-4v2h8v4H5v2z" fill="none" stroke="#6eaaf0" /></svg></PaneButton>
                <PaneButton aria-label="下一个"><svg width="14" height="10"><path d="M13 5L9 1v2H1v4h8v2z" fill="none" stroke="#6eaaf0" /></svg></PaneButton>
                <PaneButton aria-label="布局"><svg width="14" height="12" shapeRendering="crispEdges"><path d="M9.500 0v12M0 8.500h9M11 2.500h2M11 4.500h2M11 6.500h2M11 8.500h2" stroke="#6eaaf0" /></svg></PaneButton>
              </PaneButtons>
            </ChartHeader>

            <Pane $grow={649}>
              <Scale $side="left" $top={12} $bottom={30}>
                {priceLevels.map((p) => <Mark key={p} $color={toneOf(p)}>{p}</Mark>)}
              </Scale>
              <Plot>
                <Legend><LegendItem>分时走势</LegendItem><LegendItem $color={YELLOW}>均线</LegendItem></Legend>
                <PriceChart />
              </Plot>
              <Scale $side="right" $top={12} $bottom={30}>
                {percents.map((p, i) => <Mark key={p} $color={toneOf(priceLevels[i])}>{p}</Mark>)}
              </Scale>
            </Pane>
            <PaneDivider />
            <Pane $grow={283}>
              <Scale $side="left" $framed $top={12} $bottom={26}>
                {volumeLevels.map((v) => <Mark key={v} $color={YELLOW}>{v}</Mark>)}
              </Scale>
              <Plot>
                <Legend><LegendItem $color={YELLOW}>成交量</LegendItem><LegendItem>持仓量</LegendItem></Legend>
                <VolumeChart />
              </Plot>
              <Scale $side="right" $top={12} $bottom={124}>
                {interestLevels.map((v) => <Mark key={v} $color={WHITE}>{v}</Mark>)}
              </Scale>
            </Pane>
            <TimeAxis>
              {times.map((t, i) => (
                <TimeSlot key={t.label} $minutes={(times[i + 1]?.at ?? SESSION_MINUTES) - t.at}>
                  <TimeLabel>{t.label}</TimeLabel>
                </TimeSlot>
              ))}
            </TimeAxis>
          </ChartArea>

          <Panel>
            <PanelTitle>
              <h2>螺纹2405(rb2405)</h2>
              <PaneButton aria-label="还原"><svg width="10" height="8" shapeRendering="crispEdges"><path d="M.5 .5h9v7h-9zM0 1.500h10" fill="none" stroke="#6eaaf0" /></svg></PaneButton>
            </PanelTitle>
            <Ratio><RatioPart $share={178} $color={RED} /><RatioPart $share={60} $color={GREEN} /></Ratio>
            <BookTable rows={asks} best="卖一" />
            <BookTable rows={bids} best="买一" />
            <Block>
              <QuoteTable>
                <colgroup><col width="48" /><col width="65" /><col width="58" /><col /></colgroup>
                <tbody>
                  {stats.map(([a, av, ac, b, bv, bc]) => (
                    <Row key={a}>
                      <NameCell scope="row">{a}</NameCell>
                      <NumCell $color={ac}>{av}</NumCell>
                      <NameCell scope="row" $second>{b}</NameCell>
                      <NumCell $color={bc} $end>{bv}</NumCell>
                    </Row>
                  ))}
                </tbody>
              </QuoteTable>
            </Block>
            <QuoteTable>
              <colgroup><col width="41" /><col width="67" /><col width="47" /><col width="48" /><col /></colgroup>
              <thead>
                <Row $height={22}>
                  <HeadCell $left>北京</HeadCell>
                  <HeadCell>价格</HeadCell>
                  <HeadCell>
                    <svg width="13" height="12" viewBox="0 0 13 12" aria-hidden="true"><path d="M0 7l3 4L12 0" fill="none" stroke="#808080" /></svg>
                    大单
                  </HeadCell>
                  <HeadCell>仓差</HeadCell>
                  <HeadCell>性质</HeadCell>
                </Row>
              </thead>
              <tbody>
                {ticks.map(([time, price, size, diff, kind, up], i) => (
                  <Row key={i} $height={22}>
                    <TimeCell $first={i === 0}>{time}</TimeCell>
                    <NumCell $color={GREEN}>{price}</NumCell>
                    <NumCell $color={up ? RED : GREEN}>{size}</NumCell>
                    <NumCell $color={YELLOW}>{diff}</NumCell>
                    <KindCell $color={up ? RED : GREEN}>{kind}</KindCell>
                  </Row>
                ))}
              </tbody>
            </QuoteTable>
            <Tabs>
              <Tab $active>笔</Tab>
              <Tab>价</Tab>
              <Tab>权</Tab>
              <TabRest />
            </Tabs>
          </Panel>
        </Body>

        <StatusBar>
          <Market><MarketName>沪</MarketName><Change>2983.14</Change><Change $auto>-30.91</Change>3728.43亿</Market>
          <Market><MarketName>深</MarketName><Change>9328.17</Change><Change $auto>-232.32</Change>5130.17亿</Market>
          <Market><MarketName>300</MarketName><Change>3520.72</Change><Change $auto>-48.20</Change>2101.25亿</Market>
          <Clock><b>Rul</b><span>▼</span><span>15:04</span></Clock>
        </StatusBar>
      </Window>

      <SideStrip>
        <StripTop>系</StripTop>
        <StripTool><svg width="13" height="14" aria-hidden="true"><path d="M0 7l8-7 8 7-8 7z" fill="#f0b020" stroke="#b07810" /></svg></StripTool>
        <StripHandle aria-label="展开"><svg width="13" height="80"><path d="M6 61l5 4-5 4z" fill="#fff" /></svg></StripHandle>
        <StripTabs>
          {["国内期货", "股指期货", "期权报价", "期权策略", "热点排名", "新闻资讯"].map((t) => (
            <StripTab key={t}>{t.split("").map((c) => <span key={c}>{c}</span>)}</StripTab>
          ))}
        </StripTabs>
      </SideStrip>
      <Watermark>5E天资5etz.com</Watermark>
    </Screen>
  );
}
